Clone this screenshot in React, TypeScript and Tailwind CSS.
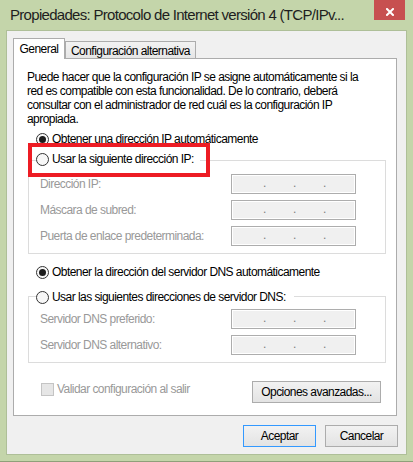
const Radio = ({ checked }: { checked?: boolean }) => (
  <span className="flex h-[13px] w-[13px] shrink-0 items-center justify-center rounded-full border border-[#333] bg-[#f7f7f7]">
    {checked && <span className="h-[7px] w-[7px] rounded-full bg-[#1c1c1c]" />}
  </span>
);

const IpBox = () => (
  <div className="flex h-[20px] w-[125px] border border-[#adadad] bg-[#f0f0f0] pl-[31px] text-[12px] leading-[16px] text-[#7d7d7d] shadow-[inset_0_0_0_1px_#fff]">
    <span className="w-[30px]">.</span>
    <span className="w-[30px]">.</span>
    <span className="w-[30px]">.</span>
  </div>
);

const Field = ({ label }: { label: string }) => (
  <div className="flex h-[20px] items-center justify-between">
    <span className="text-[#999]">{label}</span>
    <IpBox />
  </div>
);

const Btn = ({ label, focus, w }: { label: string; focus?: boolean; w: string }) => (
  <button
    className={`flex h-[22px] ${w} items-center justify-center border bg-gradient-to-b from-[#f2f2f2] to-[#e3e3e3] text-black ${
      focus ? "border-[#3399ff]" : "border-[#acacac]"
    }`}
  >
    {label}
  </button>
);

export default function App() {
  return (
    <div className="h-[462px] w-[413px] overflow-hidden border-b border-[#8fa07a] bg-[#c4d5aa] font-['Liberation_Sans',Arial,sans-serif] text-[12px] leading-[14px] tracking-[-0.55px] text-black">
      {/* title bar */}
      <div className="flex h-[30px] items-start">
        <span className="ml-[10px] mt-[5px] w-[362px] overflow-hidden whitespace-nowrap text-[15px] leading-[20px] tracking-[-0.7px] text-[#1e1e1e]">
          Propiedades: Protocolo de Internet versión 4 (TCP/IPv...
        </span>
        <div className="ml-auto mr-[8px] flex h-[20px] w-[31px] items-center justify-center bg-[#c75050]">
          <svg width="8" height="8" viewBox="0 0 8 8" className="mt-[3px]">
            <path d="M1 1L7 7M7 1L1 7" stroke="#fff" strokeWidth="2" strokeLinecap="square" />
          </svg>
        </div>
      </div>

      {/* window body */}
      <div className="mx-[6px] h-[425px] border border-[#aebf98] bg-[#f0f0f0] pt-[7px]">
        {/* tabs */}
        <div className="relative z-10 ml-[6px] flex h-[21px] items-end">
          <div className="flex h-full w-[52px] items-start justify-center border-x border-t border-[#acacac] bg-white pt-[3px]">
            General
          </div>
          <div className="flex h-[18px] w-[131px] items-center justify-center border border-[#acacac] bg-gradient-to-b from-[#f2f2f2] to-[#e6e6e6] pt-[1px]">
            Configuración alternativa
          </div>
        </div>

        {/* tab panel */}
        <div className="relative -mt-px ml-[6px] h-[358px] w-[384px] border border-[#acacac] bg-white">
          <div className="pl-[13px] pt-[11px]">
            <div className="whitespace-nowrap">Puede hacer que la configuración IP se asigne automáticamente si la</div>
            <div className="whitespace-nowrap">red es compatible con esta funcionalidad. De lo contrario, deberá</div>
            <div className="whitespace-nowrap">consultar con el administrador de red cuál es la configuración IP</div>
            <div className="whitespace-nowrap">apropiada.</div>
          </div>

          <div className="ml-[22px] mt-[3px] flex h-[20px] items-center gap-[3px]">
            <Radio checked />
            <span>Obtener una dirección IP automáticamente</span>
          </div>

          <div className="ml-[14px] mt-[11px] w-[358px] border border-[#dcdcdc] pb-[7px]">
            <div className="-mt-[12px] ml-[7px] flex h-[20px] w-fit items-center gap-[3px] bg-white pr-[6px]">
              <Radio />
              <span>Usar la siguiente dirección IP:</span>
            </div>
            <div className="mt-[5px] flex flex-col gap-[6px] pl-[11px] pr-[29px]">
              <Field label="Dirección IP:" />
              <Field label="Máscara de subred:" />
              <Field label="Puerta de enlace predeterminada:" />
            </div>
          </div>

          <div className="ml-[22px] mt-[8px] flex h-[20px] items-center gap-[3px]">
            <Radio checked />
            <span>Obtener la dirección del servidor DNS automáticamente</span>
          </div>

          <div className="ml-[14px] mt-[14px] w-[358px] border border-[#dcdcdc] pb-[7px]">
            <div className="-mt-[10px] ml-[7px] flex h-[20px] w-fit items-center gap-[3px] bg-white pr-[8px]">
              <Radio />
              <span>Usar las siguientes direcciones de servidor DNS:</span>
            </div>
            <div className="mt-[2px] flex flex-col gap-[6px] pl-[11px] pr-[29px]">
              <Field label="Servidor DNS preferido:" />
              <Field label="Servidor DNS alternativo:" />
            </div>
          </div>

          <div className="mt-[18px] flex items-start justify-between pl-[27px] pr-[15px]">
            <div className="mt-[2px] flex h-[13px] items-center gap-[3px]">
              <span className="h-[13px] w-[13px] border border-[#c4c4c4] bg-[#e6e6e6]" />
              <span className="leading-[13px] text-[#999]">Validar configuración al salir</span>
            </div>
            <Btn label="Opciones avanzadas..." w="w-[129px]" />
          </div>

          {/* annotation */}
          <div className="absolute left-[14px] top-[84px] h-[34px] w-[182px] border-4 border-[#ed1c24]" />
        </div>

        {/* dialog buttons */}
        <div className="mt-[9px] flex justify-end gap-[9px] pr-[8px]">
          <Btn label="Aceptar" focus w="w-[73px]" />
          <Btn label="Cancelar" w="w-[73px]" />
        </div>
      </div>
    </div>
  );
}
